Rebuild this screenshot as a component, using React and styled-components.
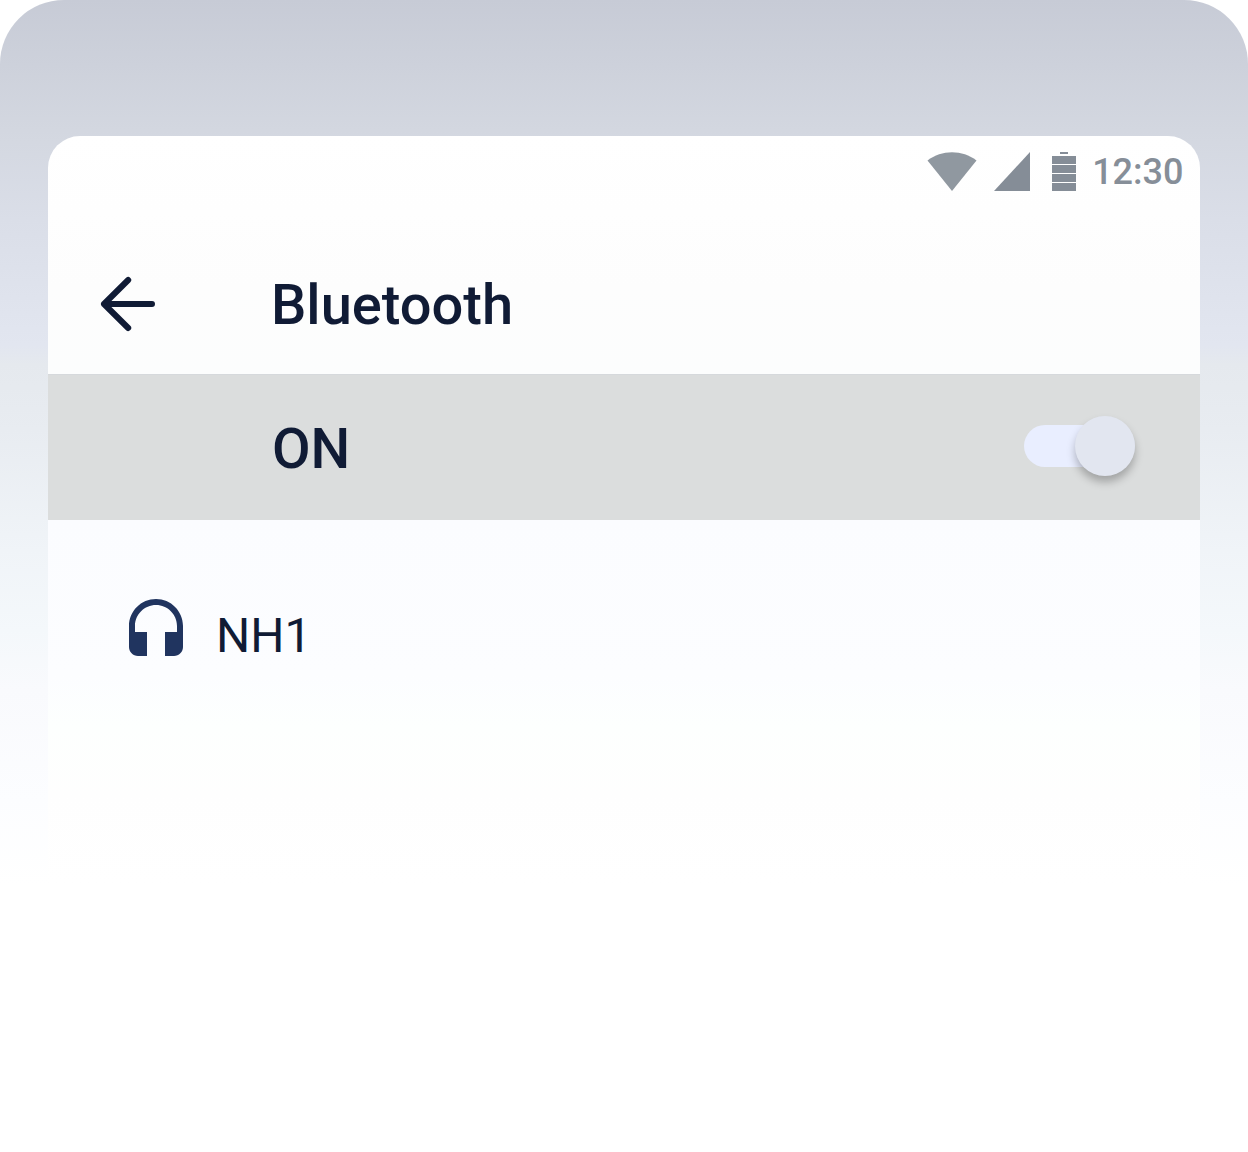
import React from "react";
import styled, { createGlobalStyle } from "styled-components";

const GlobalStyle = createGlobalStyle`
  * { box-sizing: border-box; }
  body { margin: 0; background: #fff; font-family: Roboto, sans-serif; }
`;

const Backdrop = styled.main`
  width: 1248px;
  height: 1152px;
  padding: 136px 48px 0;
  border-radius: 64px 64px 0 0;
  background: linear-gradient(
    180deg,
    #c7cbd6 0,
    #d3d7e0 130px,
    #dadee8 220px,
    #e2e6f0 345px,
    #e5e9ee 365px,
    #e8ecf1 430px,
    #f0f4f8 550px,
    #f4f8fb 630px,
    #f9fafd 690px,
    #fcfdff 800px,
    #ffffff 885px
  );
`;

const Phone = styled.section`
  display: flex;
  flex-direction: column;
  height: 1016px;
  border-radius: 32px 32px 0 0;
  overflow: hidden;
  background: linear-gradient(
    180deg,
    #ffffff 0,
    #fdfdfd 150px,
    #fcfdfd 236px,
    #fbfcff 386px,
    #fcfdff 540px,
    #fdfffe 590px,
    #fefefe 660px,
    #ffffff 750px
  );
`;

const StatusBar = styled.div`
  display: flex;
  justify-content: flex-end;
  height: 72px;
  padding: 15px 16.5px 0 0;
  color: #868e98;
`;

const StatusIcons = styled.svg`
  width: 150px;
  height: 42px;
  margin-right: 15.5px;
`;

const Time = styled.time`
  font-size: 36px;
  font-weight: 500;
  line-height: 42px;
`;

const AppBar = styled.header`
  display: flex;
  align-items: center;
  height: 166px;
  padding: 26px 0 0 52px;
`;

const BackButton = styled.button`
  display: flex;
  width: 56px;
  height: 56px;
  margin: 0 115px 0 0;
  padding: 0;
  border: 0;
  background: none;
  color: #101b35;
`;

const Heading = styled.h1`
  margin: 0;
  padding-top: 2px;
  color: #101b35;
  font-size: 56px;
  font-weight: 500;
  line-height: 64px;
`;

const PowerRow = styled.div`
  display: flex;
  align-items: center;
  justify-content: space-between;
  height: 146px;
  padding: 0 65px 1px 224px;
  background: #dbdddd;
  border-top: 1px solid #d6d9dc;
`;

const PowerLabel = styled.span`
  padding-top: 3px;
  color: #101b35;
  font-size: 56px;
  font-weight: 500;
  line-height: 64px;
`;

const Switch = styled.button`
  display: flex;
  align-items: center;
  justify-content: flex-end;
  width: 111px;
  height: 42px;
  margin: 0 0 2px;
  padding: 0;
  border: 0;
  border-radius: 21px;
  background: #e9eeff;
`;

const Thumb = styled.span`
  flex: none;
  width: 60px;
  height: 60px;
  border-radius: 50%;
  background: #e2e6f0;
  box-shadow: 0 6px 8px rgba(0, 0, 0, 0.26);
`;

const DeviceList = styled.ul`
  margin: 0;
  padding: 72px 72px 0;
  list-style: none;
`;

const Device = styled.li`
  display: flex;
  align-items: center;
  height: 72px;
`;

const DeviceIcon = styled.svg`
  width: 72px;
  height: 72px;
`;

const DeviceName = styled.span`
  margin-left: 24px;
  padding-top: 15px;
  color: #101b35;
  font-size: 48px;
  line-height: 56px;
`;

export default function App() {
  return (
    <>
      <GlobalStyle />
      <Backdrop>
        <Phone>
          <StatusBar>
            <StatusIcons viewBox="0 0 150 42" fill="#858d97" aria-hidden="true">
              <path d="M0.5 9.5C14.5-1.5 35.5-1.5 49.5 9.5L25 40Z" fill="#9098a0" />
              <path d="M67 40L103 1V40Z" />
              <path d="M133 1h8v2h-8zM125 5h24v8h-24zM125 14h24v8h-24zM125 23h24v8h-24zM125 32h24v8h-24z" />
            </StatusIcons>
            <Time>12:30</Time>
          </StatusBar>
          <AppBar>
            <BackButton aria-label="Back">
              <svg width="56" height="56" viewBox="0 0 56 56" fill="none" stroke="currentColor" strokeWidth="6" strokeLinecap="round" strokeLinejoin="round">
                <path d="M28.2 4L4 28L28.2 52M4 28H52" />
              </svg>
            </BackButton>
            <Heading>Bluetooth</Heading>
          </AppBar>
          <PowerRow>
            <PowerLabel>ON</PowerLabel>
            <Switch role="switch" aria-checked="true" aria-label="Bluetooth">
              <Thumb />
            </Switch>
          </PowerRow>
          <DeviceList>
            <Device>
              <DeviceIcon viewBox="0 0 24 24" fill="#20345f" aria-hidden="true">
                <path d="M12 2.33c-4.97 0-9 4.03-9 9v7c0 1.66 1.34 3 3 3h3v-8H5v-2c0-3.87 3.13-7 7-7s7 3.13 7 7v2h-4v8h3c1.66 0 3-1.34 3-3v-7c0-4.97-4.03-9-9-9z" />
              </DeviceIcon>
              <DeviceName>NH1</DeviceName>
            </Device>
          </DeviceList>
        </Phone>
      </Backdrop>
    </>
  );
}
